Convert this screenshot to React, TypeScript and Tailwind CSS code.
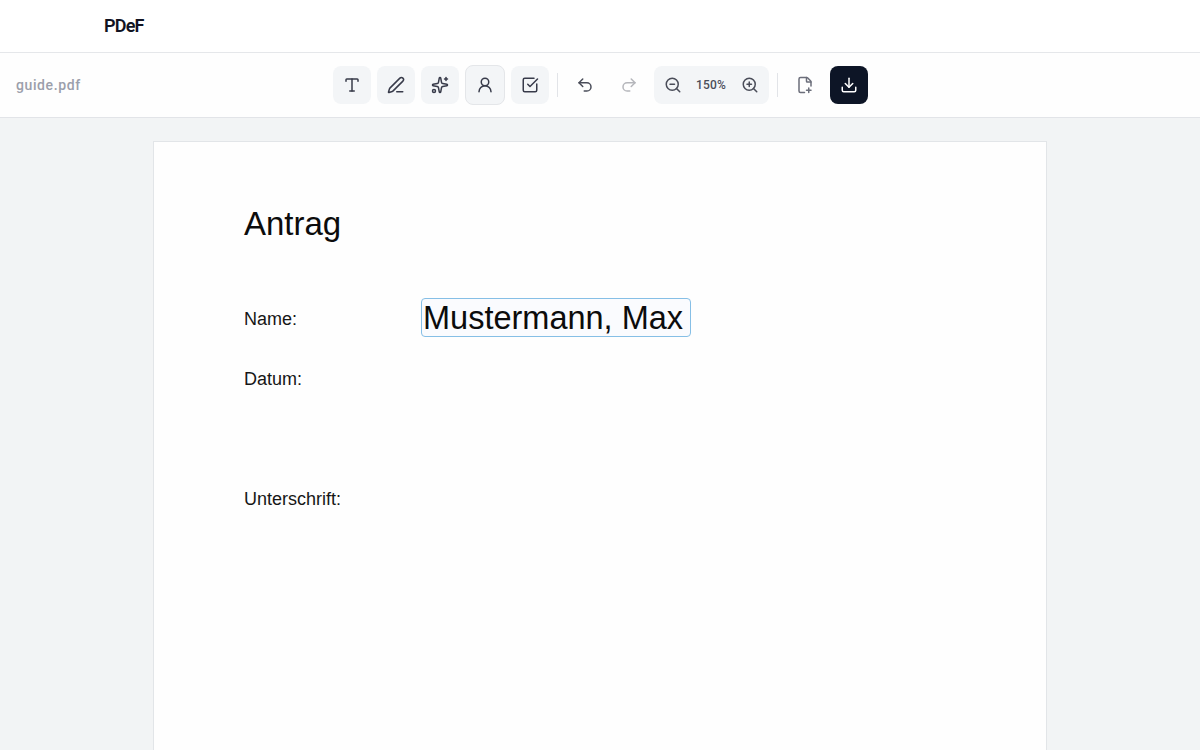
import { clsx } from 'clsx';
import type { ReactNode } from 'react';
import {
    Download,
    FilePlusCorner,
    PenLine,
    Redo2,
    Sparkles,
    SquareCheckBig,
    Type,
    Undo2,
    UserRound,
    ZoomIn,
    ZoomOut,
} from 'lucide-react';

type ToolButtonProps = {
    label: string;
    children: ReactNode;
    variant?: 'tool' | 'active' | 'plain' | 'primary';
    disabled?: boolean;
};

function ToolButton({ label, children, variant = 'tool', disabled }: ToolButtonProps) {
    return (
        <button
            aria-label={label}
            disabled={disabled}
            className={clsx(
                'flex shrink-0 items-center justify-center rounded-lg',
                variant === 'active' ? 'size-10 border border-[#e4e6e9] bg-[#f3f5f7]' : 'size-[38px]',
                variant === 'tool' && 'bg-[#f3f5f7]',
                variant === 'plain' && 'text-[#4a4d59]',
                variant === 'primary' && 'bg-[#0d1526] text-white',
                disabled && 'opacity-40'
            )}
        >
            {children}
        </button>
    );
}

function Divider() {
    return <div className="mx-0.5 h-6 w-px bg-[#e2e4e8]" />;
}

function Toolbar() {
    return (
        <div className="grid h-[65px] grid-cols-[1fr_auto_1fr] items-center border-b border-[#e2e4e8] bg-[#fefefe] pl-4 pr-[15px] text-[#383b4a]">
            <span className="text-sm font-medium tracking-[0.6px] text-[#9b9fab]">guide.pdf</span>

            <div className="flex items-center gap-1.5">
                <ToolButton label="Text">
                    <Type size={18} />
                </ToolButton>
                <ToolButton label="Zeichnen">
                    <PenLine size={18} />
                </ToolButton>
                <ToolButton label="Unterschrift">
                    <Sparkles size={18} />
                </ToolButton>
                <ToolButton label="Profil" variant="active">
                    <UserRound size={18} />
                </ToolButton>
                <ToolButton label="Checkbox">
                    <SquareCheckBig size={18} />
                </ToolButton>
                <Divider />
                <ToolButton label="Rückgängig" variant="plain">
                    <Undo2 size={18} />
                </ToolButton>
                <ToolButton label="Wiederholen" variant="plain" disabled>
                    <Redo2 size={18} />
                </ToolButton>

                {/* Zoom */}
                <div className="flex h-[38px] w-[115px] items-center rounded-lg bg-[#f3f5f7]">
                    <ToolButton label="Verkleinern" variant="plain">
                        <ZoomOut size={18} />
                    </ToolButton>
                    <span className="w-[38px] text-center text-xs font-medium tracking-[0.2px] text-[#4a4d59]">
                        150%
                    </span>
                    <ToolButton label="Vergrößern" variant="plain">
                        <ZoomIn size={18} className="ml-0.5" />
                    </ToolButton>
                </div>

                <Divider />
                <ToolButton label="Neue Datei" variant="plain">
                    <FilePlusCorner size={18} className="text-[#6b6e7a]" />
                </ToolButton>
                <ToolButton label="Herunterladen" variant="primary">
                    <Download size={18} />
                </ToolButton>
            </div>
        </div>
    );
}

function FormRow({ label, children }: { label: string; children?: ReactNode }) {
    return (
        <div className="flex h-[60px] items-center">
            <span className="w-[177px] text-[18px] leading-none text-[#161616]">{label}</span>
            {children}
        </div>
    );
}

export default function App() {
    return (
        <div className="flex h-screen flex-col overflow-hidden bg-[#f2f4f5] font-['Roboto',sans-serif]">
            <header className="h-[53px] shrink-0 border-b border-[#e5e7ea] bg-white pl-[104px]">
                <div className="flex h-[50px] items-center text-[18px] font-semibold tracking-[-0.8px] text-[#111322]">
                    PDeF
                </div>
            </header>
            <Toolbar />

            <main className="flex flex-1 justify-center overflow-hidden pt-[23px]">
                <div className="h-[1264px] w-[894px] shrink-0 border border-[#e2e5e8] bg-[#fefefe] px-[90px] pt-[62px] font-['Liberation_Sans',Arial,sans-serif]">
                    <h1 className="h-[85px] text-[33px] leading-[40px] text-[#0c0c0c]">Antrag</h1>
                    <FormRow label="Name:">
                        <div className="mb-1 h-[39px] w-[270px] whitespace-nowrap rounded border border-[#86bfe6] bg-[#fafbfe] pl-px text-[32.5px] leading-[38px] text-[#0c0c0c]">
                            Mustermann, Max
                        </div>
                    </FormRow>
                    <FormRow label="Datum:" />
                    <div className="h-[60px]" />
                    <FormRow label="Unterschrift:" />
                </div>
            </main>
        </div>
    );
}
